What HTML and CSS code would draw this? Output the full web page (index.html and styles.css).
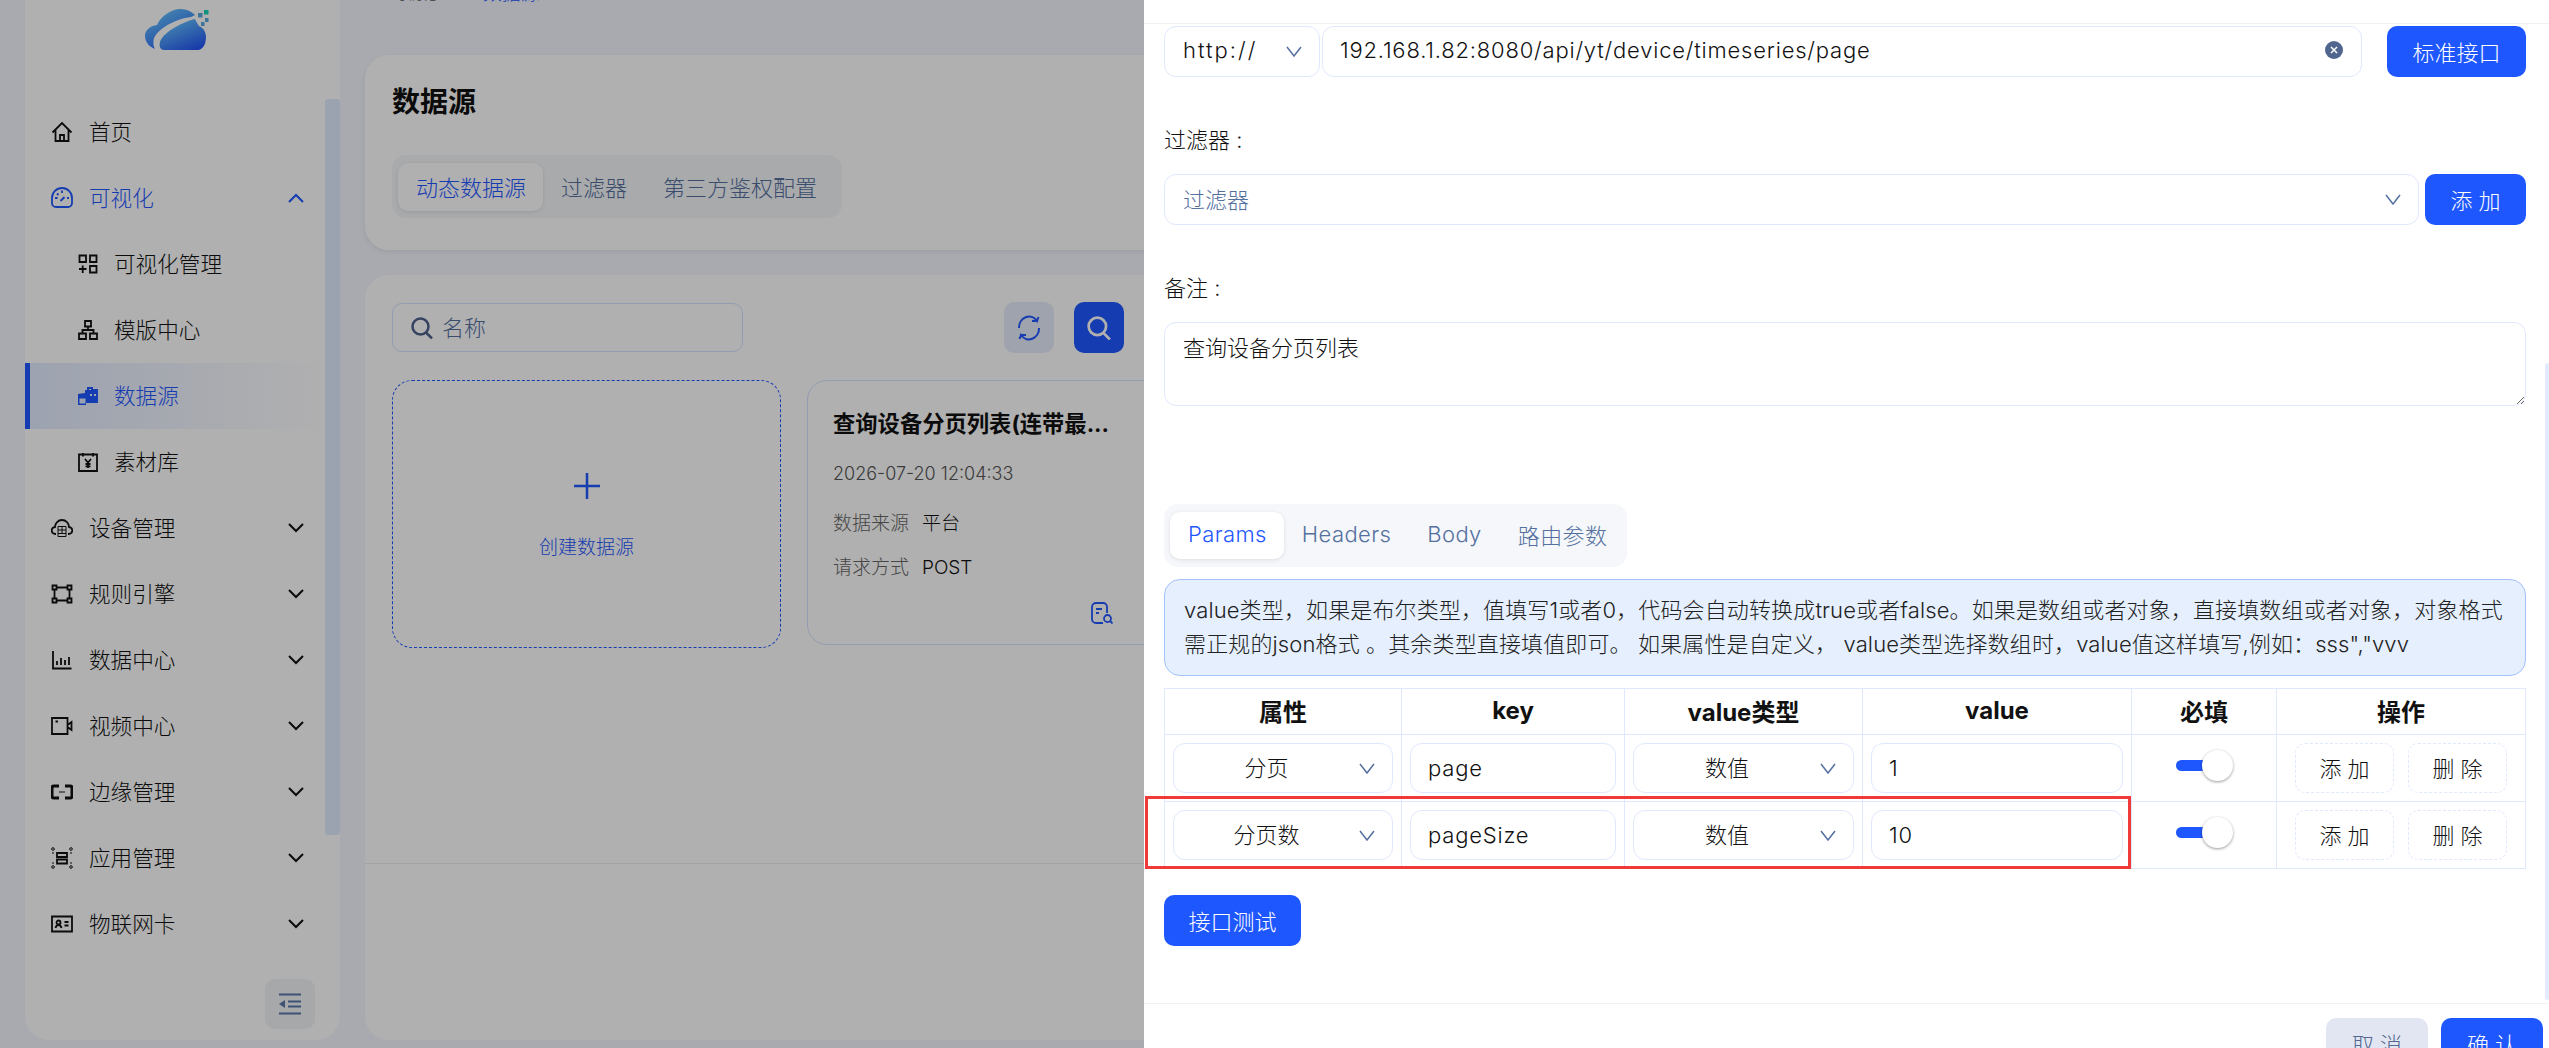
FILE: index.html
```html
<!DOCTYPE html>
<html lang="zh-CN">
<head>
    <meta charset="UTF-8">
    <title>数据源</title>
    <link rel="stylesheet" href="styles.css">
</head>
<body>
    <div class="page">
        <aside class="sidebar">
            <div class="logo">
                <svg width="64" height="44" viewBox="0 0 64 44">
                    <defs>
                        <linearGradient id="nube" x1="0.15" y1="0" x2="0.8" y2="1">
                            <stop offset="0" stop-color="#6cd0ff"/>
                            <stop offset="1" stop-color="#2354f5"/>
                        </linearGradient>
                    </defs>
                    <path d="M10 41C3 38 0 33 0 28C0 22 5 18 12 17C16 8 26 1 36 1C41 1 46 3 50 7L46 9C30 11 14 20 9 30C8 34 8 38 10 41Z" fill="url(#nube)"/>
                    <path d="M19 42C15 42 14 38 15 34C17 26 34 15 50 11C51 14 53 16 54 18C59 20 61 25 61 29C61 37 57 42 53 42Z" fill="url(#nube)"/>
                    <rect x="59" y="2" width="4.500" height="4.500" fill="#17d6b8"/>
                    <rect x="53" y="5" width="4.500" height="4.500" fill="#5aa8dc"/>
                    <rect x="60" y="10" width="3.500" height="4" fill="#5aa8dc"/>
                    <rect x="56" y="14" width="3.500" height="4" fill="#5aa8dc"/>
                </svg>
            </div>
            <div class="sidebar-body">
                <nav class="menu">
                    <a class="menu-item">
                        <svg class="ico" viewBox="0 0 22 22"><path d="M1.500 11.500 11 2l9.500 9.500M4.500 9v11h13V9M9 20v-6h4v6"/></svg>
                        首页
                    </a>
                    <a class="menu-item open">
                        <svg class="ico" viewBox="0 0 22 22"><path d="M5 20h12a4 4 0 0 0 4-4v-5a10 10 0 0 0-20 0v5a4 4 0 0 0 4 4ZM11 3.500v2.500M4 11h2.500M16 11h2M9.500 14l4-4M6 6.500l1.500 1.500"/></svg>
                        可视化
                        <svg class="chevron" viewBox="0 0 16 10"><path d="M1 9l7-7 7 7"/></svg>
                    </a>
                    <a class="menu-item sub">
                        <svg class="ico small" viewBox="0 0 20 20"><path d="M1.500 1.500h6.500v6.500H1.500zM12 1.500h6.500v6.500H12zM12 12h6.500v6.500H12zM1 15h7.500M4.700 11.500v7.500"/></svg>
                        可视化管理
                    </a>
                    <a class="menu-item sub">
                        <svg class="ico small" viewBox="0 0 20 20"><path d="M7 1h6v5.500H7zM1 13.500h7V19H1zM12 13.500h7V19h-7zM10 6.500V10M4.500 13.500V10h11v3.500"/></svg>
                        模版中心
                    </a>
                    <a class="menu-item sub active">
                        <svg class="ico small fill" viewBox="0 0 20 20"><path d="M0 8l7-1V4h2V1h6v2h5v14H8v2H0zM11 4h2V3h-2zM12 8v2h2V8zM16 8v2h2V8z" fill-rule="evenodd"/><path d="M1.500 12.500h6v5h-6z" fill="#e3ecff"/></svg>
                        数据源
                    </a>
                    <a class="menu-item sub">
                        <svg class="ico small" viewBox="0 0 20 20"><path d="M1 2.500h18v16.500H1zM5 1v3.500M15 1v3.500M7 7l3 3.500L13 7M10 10.500V16M7.500 12h5M7.500 14.300h5"/></svg>
                        素材库
                    </a>
                    <a class="menu-item">
                        <svg class="ico" viewBox="0 0 22 22"><path d="M5 17H4.500a3.500 3.500 0 0 1-.5-7 7 7 0 0 1 14 0 3.500 3.500 0 0 1-.5 7H17"/><path class="hair" d="M7 9.500h8v10H7zM7 13h8M7 16.500h8M11 9.500v7"/></svg>
                        设备管理
                        <svg class="chevron" viewBox="0 0 16 10"><path d="M1 1l7 7 7-7"/></svg>
                    </a>
                    <a class="menu-item">
                        <svg class="ico" viewBox="0 0 22 22"><path d="M1.500 2.500h4v4h-4zM16.500 2.500h4v4h-4zM1.500 15.500h4v4h-4zM16.500 15.500h4v4h-4zM5.500 4.500h11M5.500 17.500h11M3.500 6.500v9M18.500 6.500v9"/></svg>
                        规则引擎
                        <svg class="chevron" viewBox="0 0 16 10"><path d="M1 1l7 7 7-7"/></svg>
                    </a>
                    <a class="menu-item">
                        <svg class="ico" viewBox="0 0 22 22"><path d="M2 2v17.500h18.500M6 16v-4M10 16V9M14 16v-5M18 16V8"/></svg>
                        数据中心
                        <svg class="chevron" viewBox="0 0 16 10"><path d="M1 1l7 7 7-7"/></svg>
                    </a>
                    <a class="menu-item">
                        <svg class="ico" viewBox="0 0 22 22"><path d="M1 3h15.500v16H1zM16.500 10l4-3v8l-4-3M4.500 6.500h2.500"/></svg>
                        视频中心
                        <svg class="chevron" viewBox="0 0 16 10"><path d="M1 1l7 7 7-7"/></svg>
                    </a>
                    <a class="menu-item">
                        <svg class="ico thick" viewBox="0 0 22 22"><path d="M8 5H3a2 2 0 0 0-2 2v8a2 2 0 0 0 2 2h5M14 5h5a2 2 0 0 1 2 2v8a2 2 0 0 1-2 2h-5"/><path class="hair" d="M8 11h6"/></svg>
                        边缘管理
                        <svg class="chevron" viewBox="0 0 16 10"><path d="M1 1l7 7 7-7"/></svg>
                    </a>
                    <a class="menu-item">
                        <svg class="ico" viewBox="0 0 22 22"><path d="M6 6h10v4H6zM6 12.500h10v4H6z"/><circle class="dot" cx="2" cy="2" r="1.300"/><circle class="dot" cx="20" cy="2" r="1.300"/><circle class="dot" cx="2" cy="20" r="1.300"/><circle class="dot" cx="20" cy="20" r="1.300"/><path class="hair" d="M2 5v2M20 5v2M2 15v2M20 15v2"/></svg>
                        应用管理
                        <svg class="chevron" viewBox="0 0 16 10"><path d="M1 1l7 7 7-7"/></svg>
                    </a>
                    <a class="menu-item">
                        <svg class="ico" viewBox="0 0 22 22"><path d="M1 3.500h20v15H1zM4.500 15c.5-2 1.500-3 3-3s2.500 1 3 3M13.500 9h4M13.500 12.500h4"/><circle cx="7.500" cy="9.500" r="2"/></svg>
                        物联网卡
                        <svg class="chevron" viewBox="0 0 16 10"><path d="M1 1l7 7 7-7"/></svg>
                    </a>
                </nav>
                <div class="bar-side"></div>
            </div>
            <div class="collapse-row">
                <button class="collapse">
                    <svg width="22" height="22" viewBox="0 0 22 22"><path d="M0 1.500h22M9 8.500h13M9 13.500h13M0 20.500h22" stroke="#5b77a8" stroke-width="2" fill="none"/><path d="M0 11l6-4v8z" fill="#5b77a8"/></svg>
                </button>
            </div>
        </aside>

        <main class="content">
            <div class="breadcrumb">
                <span>可视化</span><span class="sep">&gt;</span><span class="current">数据源</span>
            </div>
            <section class="card top-card">
                <h1 class="title">数据源</h1>
                <div class="tabs">
                    <span class="tab selected">动态数据源</span>
                    <span class="tab">过滤器</span>
                    <span class="tab">第三方鉴权配置</span>
                </div>
            </section>
            <section class="card list-card">
                <div class="toolbar">
                    <div class="search">
                        <svg class="search-ico" viewBox="0 0 22 22"><circle cx="9.500" cy="9.500" r="8"/><path d="M15 15.500l6 6"/></svg>
                        名称
                    </div>
                    <button class="icon-btn light">
                        <svg width="26" height="30" viewBox="0 0 26 30"><path d="M3 15a10 11 0 0 1 18-7l1.500-4M23 15a10 11 0 0 1-18 7l-1.500 4M21 8h-5M5 22h5" fill="none" stroke="#1f57ff" stroke-width="2"/></svg>
                    </button>
                    <button class="icon-btn">
                        <svg class="search-ico white" viewBox="0 0 22 22"><circle cx="9.500" cy="9.500" r="8"/><path d="M15 15.500l6 6"/></svg>
                    </button>
                </div>
                <div class="grid">
                    <div class="create">
                        <svg width="26" height="26" viewBox="0 0 26 26"><path d="M13 0v26M0 13h26" stroke="#1f57ff" stroke-width="2.500"/></svg>
                        <span>创建数据源</span>
                    </div>
                    <div class="source">
                        <div class="source-title">查询设备分页列表(连带最...</div>
                        <div class="source-date">2026-07-20 12:04:33</div>
                        <div class="source-row"><span class="muted">数据来源</span><span>平台</span></div>
                        <div class="source-row"><span class="muted">请求方式</span><span>POST</span></div>
                        <div class="source-actions">
                            <svg width="22" height="22" viewBox="0 0 22 22" fill="none" stroke="#1f57ff" stroke-width="1.800"><path d="M12 21H5a4 4 0 0 1-4-4V5a4 4 0 0 1 4-4h7a4 4 0 0 1 4 4v6M5 7h6M5 11h3"/><circle cx="16.500" cy="16.500" r="3.500"/><path d="M19 19l2.500 2.500"/></svg>
                            <svg width="22" height="22" viewBox="0 0 22 22" fill="none" stroke="#1f57ff" stroke-width="1.800"><path d="M4 4h14v16H4z"/></svg>
                        </div>
                    </div>
                </div>
                <div class="pager-line"></div>
            </section>
        </main>
    </div>

    <div class="mask"></div>

    <div class="drawer">
        <div class="drawer-top"></div>
        <div class="drawer-body">
            <div class="field-row">
                <div class="box pick protocol"><span class="pick-text left">http://</span><svg class="caret" viewBox="0 0 16 11"><path d="M1 1l7 9 7-9"/></svg></div>
                <div class="box url">
                    <span>192.168.1.82:8080/api/yt/device/timeseries/page</span>
                    <svg class="clear" width="18" height="18" viewBox="0 0 18 18"><circle cx="9" cy="9" r="9" fill="#51668f"/><path d="M6 6l6 6M12 6l-6 6" stroke="#fff" stroke-width="1.500"/></svg>
                </div>
                <button class="btn std">标准接口</button>
            </div>

            <div class="label">过滤器 :</div>
            <div class="field-row tight">
                <div class="box pick grow"><span class="pick-text left hint">过滤器</span><svg class="caret" viewBox="0 0 16 11"><path d="M1 1l7 9 7-9"/></svg></div>
                <button class="btn add">添 加</button>
            </div>

            <div class="label">备注 :</div>
            <textarea class="note">查询设备分页列表</textarea>

            <div class="tabs inner">
                <span class="tab selected">Params</span>
                <span class="tab">Headers</span>
                <span class="tab">Body</span>
                <span class="tab">路由参数</span>
            </div>

            <div class="alert">
                value类型，如果是布尔类型，值填写1或者0，代码会自动转换成true或者false。如果是数组或者对象，直接填数组或者对象，对象格式<br>
                需正规的json格式 。其余类型直接填值即可。 如果属性是自定义， value类型选择数组时，value值这样填写,例如：sss","vvv
            </div>

            <table class="params">
                <colgroup>
                    <col class="c1"><col class="c2"><col class="c3"><col class="c4"><col class="c5"><col class="c6">
                </colgroup>
                <tr class="head">
                    <th>属性</th><th>key</th><th>value类型</th><th>value</th><th>必填</th><th>操作</th>
                </tr>
                <tr>
                    <td><div class="box pick"><span class="pick-text">分页</span><svg class="caret" viewBox="0 0 16 11"><path d="M1 1l7 9 7-9"/></svg></div></td>
                    <td><div class="box">page</div></td>
                    <td><div class="box pick"><span class="pick-text">数值</span><svg class="caret" viewBox="0 0 16 11"><path d="M1 1l7 9 7-9"/></svg></div></td>
                    <td><div class="box">1</div></td>
                    <td><div class="toggle"><i></i><b></b></div></td>
                    <td><div class="ops"><button class="ghost">添 加</button><button class="ghost">删 除</button></div></td>
                </tr>
                <tr>
                    <td><div class="box pick"><span class="pick-text">分页数</span><svg class="caret" viewBox="0 0 16 11"><path d="M1 1l7 9 7-9"/></svg></div></td>
                    <td><div class="box">pageSize</div></td>
                    <td><div class="box pick"><span class="pick-text">数值</span><svg class="caret" viewBox="0 0 16 11"><path d="M1 1l7 9 7-9"/></svg></div></td>
                    <td><div class="box">10</div></td>
                    <td><div class="toggle"><i></i><b></b></div></td>
                    <td><div class="ops"><button class="ghost">添 加</button><button class="ghost">删 除</button></div></td>
                </tr>
            </table>

            <button class="btn test">接口测试</button>
        </div>
        <div class="drawer-foot">
            <button class="btn cancel">取 消</button>
            <button class="btn ok">确 认</button>
        </div>
        <div class="redbox"></div>
        <div class="bar-drawer"></div>
    </div>
</body>
</html>
```

FILE: styles.css
```css
* {
    box-sizing: border-box;
}
html, body {
    height: 100%;
    margin: 0;
    overflow: hidden;
}
body {
    font-family: Inter, "Noto Sans CJK SC", sans-serif;
    font-size: 22px;
    font-weight: 300;
    color: #111;
    background-color: #f4f7ff;
}
button {
    font-family: inherit;
    font-weight: inherit;
    border: none;
    padding: 0;
    cursor: pointer;
}
.page {
    display: flex;
    height: 1048px;
    padding-left: 25px;
}

/* menu */
.sidebar {
    width: 315px;
    height: 1040px;
    flex-shrink: 0;
    background-color: #fff;
    border-radius: 0 0 24px 24px;
}
.logo {
    height: 99px;
    padding: 8px 0 0 120px;
}
.sidebar-body {
    display: flex;
    height: 859px;
    overflow: hidden;
}
.menu {
    width: 300px;
}
.bar-side {
    width: 15px;
    height: 736px;
    background-color: #e3ecff;
    border-radius: 3px;
}
.menu-item {
    display: flex;
    align-items: center;
    gap: 16px;
    height: 66px;
    padding: 0 21px 3px 26px;
    font-size: 21.6px;
}
.menu-item.sub {
    padding-left: 53px;
}
.menu-item.open {
    color: #1f57ff;
}
.menu-item.active {
    color: #1f57ff;
    padding-left: 48px;
    border-left: 5px solid #1f57ff;
    background: linear-gradient(90deg, #e3ecff, #fff);
}
.ico {
    width: 22px;
    height: 22px;
    margin-top: 3px;
    flex-shrink: 0;
    fill: none;
    stroke: currentColor;
    stroke-width: 1.800;
}
.ico.small {
    width: 20px;
    height: 20px;
}
.ico.fill {
    fill: currentColor;
    stroke: none;
}
.ico.thick {
    stroke-width: 3;
}
.ico .hair {
    stroke-width: 1;
}
.ico .dot {
    stroke-width: 1;
}
.chevron {
    width: 16px;
    height: 10px;
    margin: 3px 0 0 auto;
    fill: none;
    stroke: currentColor;
    stroke-width: 2;
}
.collapse-row {
    display: flex;
    justify-content: flex-end;
    padding: 21px 25px 0 0;
}
.collapse {
    display: flex;
    align-items: center;
    justify-content: center;
    width: 50px;
    height: 50px;
    background-color: #f1f3f7;
    border-radius: 10px;
}

/* main */
.content {
    flex: 1;
    margin-left: 25px;
}
.breadcrumb {
    display: flex;
    height: 55px;
    margin-top: -21px;
    margin-bottom: 21px;
    padding: 0 0 0 27px;
    font-size: 15px;
    line-height: 30px;
    color: #555;
}
.sep {
    margin: 0 21px 0 15px;
}
.current {
    font-size: 19px;
    color: #1f57ff;
}
.card {
    background-color: #fff;
    border-radius: 24px;
}
.top-card {
    height: 195px;
    padding: 27px 27px 0;
    margin-bottom: 25px;
    box-shadow: 0 2px 6px rgba(0, 0, 0, 0.08);
}
.title {
    margin: 0 0 33px;
    font-size: 28px;
    line-height: 40px;
    font-weight: 700;
}
.tabs {
    display: inline-flex;
    height: 63px;
    padding: 8px 7px 7px 6px;
    background-color: #f5f7fa;
    border-radius: 14px;
}
.tab {
    display: flex;
    align-items: center;
    flex-shrink: 0;
    height: 48px;
    padding: 0 18px 3px;
    white-space: nowrap;
    color: #54709f;
}
.tab.selected {
    padding: 0 17px 3px 18px;
    color: #1f57ff;
    background-color: #fff;
    border-radius: 10px;
    box-shadow: 0 1px 4px rgba(0, 0, 0, 0.1);
}
.list-card {
    position: relative;
    height: 765px;
    padding: 27px 0 0 27px;
}
.toolbar {
    display: flex;
    align-items: center;
    gap: 20px;
    width: 732px;
    height: 51px;
}
.search {
    display: flex;
    align-items: center;
    gap: 9px;
    width: 351px;
    height: 49px;
    margin-right: auto;
    padding: 0 0 3px 18px;
    color: #54709f;
    border: 1px solid #d5e2ff;
    border-radius: 10px;
}
.search-ico {
    width: 22px;
    height: 22px;
    margin-top: 3px;
    fill: none;
    stroke: #4d628c;
    stroke-width: 2.500;
}
.search-ico.white {
    width: 24px;
    height: 24px;
    margin-top: 0;
    stroke: #fff;
}
.icon-btn {
    display: flex;
    align-items: center;
    justify-content: center;
    width: 50px;
    height: 51px;
    background-color: #1f57ff;
    border-radius: 10px;
}
.icon-btn.light {
    background-color: #e7ecfb;
}
.grid {
    display: flex;
    gap: 26px;
    margin-top: 27px;
}
.create {
    display: flex;
    flex-direction: column;
    align-items: center;
    width: 389px;
    height: 268px;
    padding-top: 92px;
    font-size: 19px;
    color: #1f57ff;
    border: 1.500px dashed #1f57ff;
    border-radius: 20px;
}
.create span {
    margin-top: 33px;
}
.source {
    width: 389px;
    height: 265px;
    padding: 25px 0 0 25px;
    border: 1px solid #d5e2ff;
    border-radius: 20px;
}
.source-title {
    font-size: 22.300px;
    font-weight: 700;
    line-height: 36px;
    white-space: nowrap;
}
.source-date {
    margin-top: 14px;
    font-size: 18px;
    line-height: 36px;
    color: #555;
}
.source-row {
    display: flex;
    gap: 13px;
    margin-top: 14px;
    font-size: 19px;
    line-height: 35px;
}
.source-row + .source-row {
    margin-top: 9px;
}
.muted {
    color: #666;
}
.source-actions {
    display: flex;
    gap: 30px;
    margin: 17px 0 0 258px;
}
.pager-line {
    position: absolute;
    left: 0;
    right: 0;
    top: 588px;
    height: 1px;
    background-color: #eee;
}
.mask {
    position: fixed;
    inset: 0;
    background-color: rgba(0, 0, 0, 0.31);
}

/* drawer */
.drawer {
    position: fixed;
    top: 0;
    right: 0;
    bottom: 0;
    width: 1405px;
    background-color: #fff;
    overflow: hidden;
}
.drawer-top {
    height: 24px;
    border-bottom: 1px solid #f0f0f0;
}
.drawer-body {
    padding: 2px 23px 0 20px;
    height: 979px;
}
.field-row {
    display: flex;
    gap: 25px;
}
.field-row.tight {
    gap: 6px;
}
.box {
    display: flex;
    align-items: center;
    height: 50px;
    padding: 0 17px;
    letter-spacing: 0.8px;
    background-color: #fff;
    border: 1px solid #dfe8fd;
    border-radius: 12px;
}
.field-row .box {
    height: 51px;
}
.pick {
    justify-content: space-between;
    padding: 0 17px 4px 0;
    letter-spacing: 0;
}
.pick-text {
    flex: 1;
    text-align: center;
}
.pick-text.left {
    padding-left: 18px;
    text-align: left;
}
.pick-text.hint {
    color: #54709f;
}
.caret {
    width: 16px;
    height: 11px;
    margin-top: 4px;
    flex-shrink: 0;
    fill: none;
    stroke: #54709f;
    stroke-width: 1.500;
}
.protocol {
    width: 156px;
    margin-right: -23px;
    letter-spacing: 2px;
}
.url {
    flex: 1;
    justify-content: space-between;
    padding-bottom: 3px;
    padding-right: 18px;
}
.grow {
    flex: 1;
}
.btn {
    height: 51px;
    padding-bottom: 2px;
    font-size: 22px;
    color: #fff;
    background-color: #1f57ff;
    border-radius: 10px;
}
.btn.std {
    width: 139px;
}
.btn.add {
    width: 101px;
}
.btn.test {
    display: block;
    width: 137px;
    margin-top: 26px;
}
.label {
    margin: 43px 0 14px;
    line-height: 40px;
}
.note {
    display: block;
    width: 100%;
    height: 84px;
    padding: 8px 18px;
    font-family: inherit;
    font-size: 22px;
    font-weight: inherit;
    line-height: 34px;
    color: #111;
    border: 1px solid #dfe8fd;
    border-radius: 12px;
    outline: none;
}
.tabs.inner {
    display: flex;
    width: 463px;
    margin-top: 98px;
    letter-spacing: 0.4px;
}
.tabs.inner .tab {
    height: 47px;
}
.alert {
    height: 97px;
    margin-top: 12px;
    padding: 13px 19px;
    line-height: 34px;
    letter-spacing: 0.13px;
    white-space: nowrap;
    color: #222;
    background-color: #e5effd;
    border: 1px solid #a3c2fb;
    border-radius: 16px;
}
.params {
    width: 100%;
    margin-top: 12px;
    table-layout: fixed;
    border-collapse: collapse;
}
.c1 { width: 237px; }
.c2 { width: 223px; }
.c3 { width: 238px; }
.c4 { width: 269px; }
.c5 { width: 145px; }
.c6 { width: 249px; }
.params th, .params td {
    padding: 0 8px;
    border: 1px solid #dfe8fd;
}
.params th {
    height: 46px;
    padding-bottom: 2px;
    font-size: 24px;
    font-weight: 700;
}
.params td {
    height: 67px;
}
.toggle {
    position: relative;
    width: 56px;
    height: 31px;
    margin: 0 auto 6px;
}
.toggle i {
    position: absolute;
    left: 0;
    top: 10px;
    width: 34px;
    height: 11px;
    background-color: #1f57ff;
    border-radius: 6px;
}
.toggle b {
    position: absolute;
    left: 26px;
    top: 0;
    width: 31px;
    height: 31px;
    background-color: #fff;
    border-radius: 50%;
    box-shadow: 0 1px 3px rgba(0, 0, 0, 0.4);
}
.ops {
    display: flex;
    justify-content: center;
    gap: 14px;
}
.ghost {
    width: 99px;
    height: 50px;
    padding-bottom: 2px;
    font-size: 22px;
    color: #111;
    background-color: #fff;
    border: 1px dashed #dfe8fd;
    border-radius: 10px;
}
.drawer-foot {
    display: flex;
    justify-content: flex-end;
    gap: 13px;
    padding: 14px 6px 0 0;
    border-top: 1px solid #f0f2f5;
}
.btn.cancel, .btn.ok {
    width: 102px;
}
.btn.cancel {
    color: #54688f;
    background-color: #e1e6f2;
}
.redbox {
    position: absolute;
    left: 1px;
    top: 796px;
    width: 986px;
    height: 73px;
    border: 3px solid #f03a3a;
}
.bar-drawer {
    position: absolute;
    right: 0;
    top: 363px;
    width: 4px;
    height: 637px;
    background-color: #e3ecff;
    border-radius: 3px 0 0 3px;
}
```
